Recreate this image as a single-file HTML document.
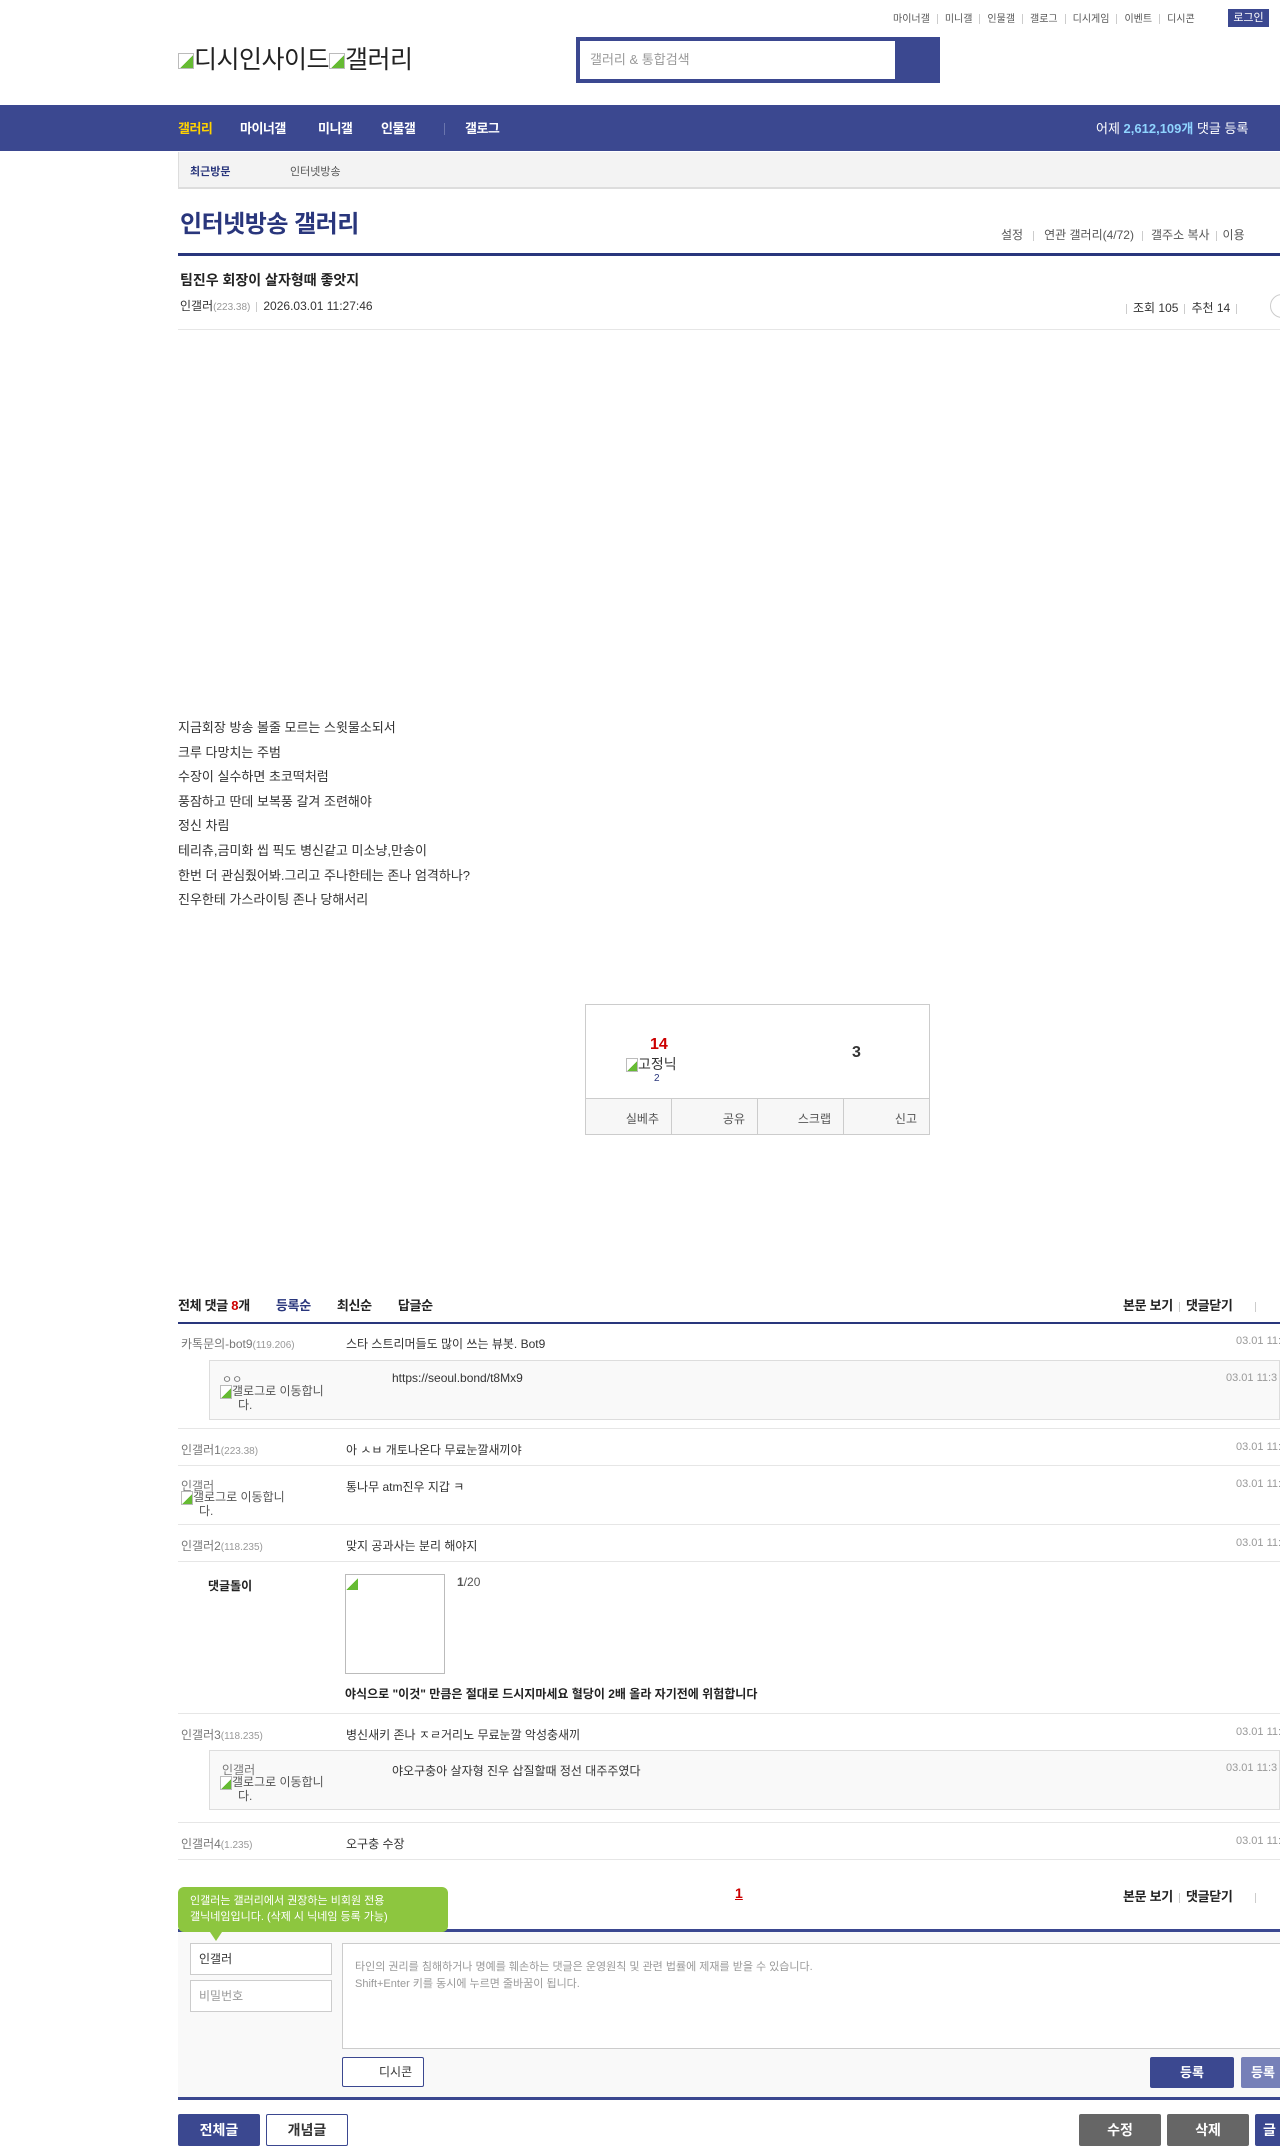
<!DOCTYPE html>
<html><head><meta charset="utf-8"><style>
*{margin:0;padding:0;box-sizing:border-box}
html,body{width:1280px;height:2144px;overflow:hidden;background:#fff;font-family:"Liberation Sans","Noto Sans CJK KR",sans-serif;color:#333;font-size:12px}
.a{position:absolute;white-space:nowrap}
.nv{background:#3b4890}
.g{color:#999}
.sep{display:inline-block;width:1px;height:10px;background:#ccc;margin:0 6px;vertical-align:middle}
.line{position:absolute;left:178px;width:1102px;height:1px;background:#e6e6e6}
.broken{display:inline-block;width:16px;height:16px;border:1px solid #bbb;background:linear-gradient(135deg,#fff 55%,#6b3 55%);vertical-align:middle}
.nvi{position:absolute;top:119px;font-size:13px;font-weight:bold;color:#fff;line-height:20px;letter-spacing:-0.5px}
.ct{font-size:12px}
</style></head><body>
<div class="a" style="top:10px;left:893px;font-size:10px;color:#555">마이너갤<span class="sep" style="margin:0 7px"></span>미니갤<span class="sep" style="margin:0 7px"></span>인물갤<span class="sep" style="margin:0 7px"></span>갤로그<span class="sep" style="margin:0 7px"></span>디시게임<span class="sep" style="margin:0 7px"></span>이벤트<span class="sep" style="margin:0 7px"></span>디시콘</div>
<div class="a nv" style="top:9px;left:1228px;width:41px;height:18px;color:#fff;font-size:11px;line-height:18px;text-align:center">로그인</div>
<div class="a" style="top:40px;left:178px;font-size:25px;color:#222;letter-spacing:-0.5px"><span class="broken"></span>디시인사이드<span class="broken"></span>갤러리</div>
<div class="a nv" style="top:37px;left:576px;width:364px;height:46px"></div>
<div class="a" style="top:41px;left:580px;width:315px;height:38px;background:#fff;font-size:13px;color:#999;line-height:38px;padding-left:10px">갤러리 &amp; 통합검색</div>
<div class="a nv" style="top:105px;left:0;width:1280px;height:46px"></div>
<div class="nvi" style="left:178px;color:#ffd200">갤러리</div>
<div class="nvi" style="left:240px">마이너갤</div>
<div class="nvi" style="left:318px">미니갤</div>
<div class="nvi" style="left:381px">인물갤</div>
<div class="a" style="top:123px;left:444px;width:1px;height:12px;background:#6a75ad"></div>
<div class="nvi" style="left:465px">갤로그</div>
<div class="a" style="top:119px;left:1096px;font-size:13px;color:#fff;line-height:20px">어제 <b style="color:#8fd4ff">2,612,109개</b> 댓글 등록</div>
<div class="a" style="top:152px;left:178px;width:1102px;height:37px;background:#f3f3f3;border-left:1px solid #ddd;border-bottom:2px solid #ddd"></div>
<div class="a" style="top:163px;left:190px;font-size:11px;font-weight:bold;color:#29367c">최근방문</div>
<div class="a" style="top:163px;left:290px;font-size:11px;color:#555">인터넷방송</div>
<div class="a" style="top:204px;left:180px;font-size:24px;font-weight:bold;color:#29367c;letter-spacing:-0.5px">인터넷방송 갤러리</div>
<div class="a" style="top:226px;left:1001px;font-size:12px;color:#555">설정<span class="sep" style="margin:0 10px"></span>연관 갤러리(4/72)<span class="sep" style="margin:0 8px"></span>갤주소 복사<span class="sep"></span>이용</div>
<div class="a" style="top:253px;left:178px;width:1102px;height:3px;background:#29367c"></div>
<div class="a" style="top:270px;left:180px;font-size:14px;font-weight:bold;color:#222">팀진우 회장이 살자형때 좋앗지</div>
<div class="a" style="top:297px;left:180px;font-size:12px;color:#333">인갤러<span style="font-size:10px;color:#999">(223.38)</span><span class="sep"></span>2026.03.01 11:27:46</div>
<div class="a" style="top:299px;left:1120px;font-size:12px;color:#333"><span class="sep"></span>조회 105<span class="sep"></span>추천 14<span class="sep"></span></div>
<div class="a" style="top:294px;left:1270px;width:24px;height:24px;border:1px solid #ccc;border-radius:12px"></div>
<div class="line" style="top:329px"></div>
<div class="a" style="top:716px;left:178px;font-size:13px;line-height:24.6px;color:#333">지금회장 방송 볼줄 모르는 스윗물소되서<br>크루 다망치는 주범<br>수장이 실수하면 초코떡처럼<br>풍잠하고 딴데 보복풍 갈겨 조련해야<br>정신 차림<br>테리츄,금미화 씹 픽도 병신같고 미소냥,만송이<br>한번 더 관심줬어봐.그리고 주나한테는 존나 엄격하나?<br>진우한테 가스라이팅 존나 당해서리</div>
<div class="a" style="top:1004px;left:585px;width:345px;height:131px;border:1px solid #ccc;border-bottom-width:2px"></div>
<div class="a" style="top:1036px;left:650px;font-size:16px;font-weight:bold;color:#c00">14</div>
<div class="a" style="top:1054px;left:626px;font-size:14px;color:#333"><span class="broken" style="width:12px;height:14px"></span>고정닉</div>
<div class="a" style="top:1073px;left:654px;font-size:10px;color:#29367c">2</div>
<div class="a" style="top:1044px;left:852px;font-size:16px;font-weight:bold;color:#333">3</div>
<div class="a" style="top:1098px;left:586px;width:343px;height:36px;background:#f7f7f7;border-top:1px solid #ccc;display:flex;font-size:12px;color:#555">
<div style="flex:1;border-right:1px solid #ccc;text-align:right;padding:11px 12px 0 0">실베추</div>
<div style="flex:1;border-right:1px solid #ccc;text-align:right;padding:11px 12px 0 0">공유</div>
<div style="flex:1;border-right:1px solid #ccc;text-align:right;padding:11px 12px 0 0">스크랩</div>
<div style="flex:1;text-align:right;padding:11px 12px 0 0">신고</div></div>
<div class="a" style="top:1295px;left:178px;font-size:13px;font-weight:bold;color:#222;letter-spacing:-0.3px">전체 댓글 <span style="color:#c00">8</span>개<span style="color:#29367c;margin-left:26px">등록순</span><span style="margin-left:26px">최신순</span><span style="margin-left:26px">답글순</span></div>
<div class="a" style="top:1295px;left:1123px;font-size:13px;font-weight:bold;color:#222;letter-spacing:-0.3px">본문 보기<span class="sep"></span>댓글닫기<span class="sep" style="margin-left:22px"></span></div>
<div class="a" style="top:1322px;left:178px;width:1102px;height:2px;background:#29367c"></div>
<div class="a" style="top:1335px;left:181px;font-size:12px;color:#777">카톡문의-bot9<span style="font-size:10px;color:#999">(119.206)</span></div>
<div class="a ct" style="top:1335px;left:346px">스타 스트리머들도 많이 쓰는 뷰봇. Bot9</div>
<div class="a g" style="top:1335px;left:1236px;font-size:11px">03.01 11:</div>
<div class="a" style="top:1360px;left:209px;width:1071px;height:60px;background:#f9f9f9;border:1px solid #ddd"></div>
<div class="a" style="top:1371px;left:222px;font-size:11px;color:#777">ㅇㅇ</div>
<div class="a" style="top:1385px;left:220px;font-size:12px;color:#555;line-height:12px"><span class="broken" style="width:12px;height:14px"></span>갤로그로 이동합니<br><span style="margin-left:18px">다.</span></div>
<div class="a" style="top:1371px;left:392px;font-size:12px">https://seoul.bond/t8Mx9</div>
<div class="a g" style="top:1372px;left:1226px;font-size:11px">03.01 11:3</div>
<div class="line" style="top:1428px"></div>
<div class="a" style="top:1441px;left:181px;font-size:12px;color:#777">인갤러1<span style="font-size:10px;color:#999">(223.38)</span></div>
<div class="a ct" style="top:1441px;left:346px">아 ㅅㅂ 개토나온다 무료눈깔새끼야</div>
<div class="a g" style="top:1441px;left:1236px;font-size:11px">03.01 11:</div>
<div class="line" style="top:1465px"></div>
<div class="a" style="top:1477px;left:181px;font-size:12px;color:#777">인갤러</div>
<div class="a" style="top:1491px;left:181px;font-size:12px;color:#555;line-height:12px"><span class="broken" style="width:12px;height:14px"></span>갤로그로 이동합니<br><span style="margin-left:18px">다.</span></div>
<div class="a ct" style="top:1478px;left:346px">통나무 atm진우 지갑 ㅋ</div>
<div class="a g" style="top:1478px;left:1236px;font-size:11px">03.01 11:</div>
<div class="line" style="top:1524px"></div>
<div class="a" style="top:1537px;left:181px;font-size:12px;color:#777">인갤러2<span style="font-size:10px;color:#999">(118.235)</span></div>
<div class="a ct" style="top:1537px;left:346px">맞지 공과사는 분리 해야지</div>
<div class="a g" style="top:1537px;left:1236px;font-size:11px">03.01 11:</div>
<div class="line" style="top:1561px"></div>
<div class="a" style="top:1577px;left:208px;font-size:12px;font-weight:bold;color:#222">댓글돌이</div>
<div class="a" style="top:1574px;left:345px;width:100px;height:100px;border:1px solid #bbb"><span class="broken" style="width:12px;height:14px;border:0"></span></div>
<div class="a" style="top:1575px;left:457px;font-size:12px;color:#555"><b>1</b>/20</div>
<div class="a" style="top:1685px;left:345px;font-size:12px;font-weight:bold;color:#222">야식으로 "이것" 만큼은 절대로 드시지마세요 혈당이 2배 올라 자기전에 위험합니다</div>
<div class="line" style="top:1713px"></div>
<div class="a" style="top:1726px;left:181px;font-size:12px;color:#777">인갤러3<span style="font-size:10px;color:#999">(118.235)</span></div>
<div class="a ct" style="top:1726px;left:346px">병신새키 존나 ㅈㄹ거리노 무료눈깔 악성충새끼</div>
<div class="a g" style="top:1726px;left:1236px;font-size:11px">03.01 11:</div>
<div class="a" style="top:1750px;left:209px;width:1071px;height:60px;background:#f9f9f9;border:1px solid #ddd"></div>
<div class="a" style="top:1761px;left:222px;font-size:12px;color:#777">인갤러</div>
<div class="a" style="top:1776px;left:220px;font-size:12px;color:#555;line-height:12px"><span class="broken" style="width:12px;height:14px"></span>갤로그로 이동합니<br><span style="margin-left:18px">다.</span></div>
<div class="a ct" style="top:1762px;left:392px">야오구충아 살자형 진우 삽질할때 정선 대주주였다</div>
<div class="a g" style="top:1762px;left:1226px;font-size:11px">03.01 11:3</div>
<div class="line" style="top:1822px"></div>
<div class="a" style="top:1835px;left:181px;font-size:12px;color:#777">인갤러4<span style="font-size:10px;color:#999">(1.235)</span></div>
<div class="a ct" style="top:1835px;left:346px">오구충 수장</div>
<div class="a g" style="top:1835px;left:1236px;font-size:11px">03.01 11:</div>
<div class="line" style="top:1859px"></div>
<div class="a" style="top:1885px;left:735px;font-size:14px;font-weight:bold;color:#c00;text-decoration:underline">1</div>
<div class="a" style="top:1886px;left:1123px;font-size:13px;font-weight:bold;color:#222;letter-spacing:-0.3px">본문 보기<span class="sep"></span>댓글닫기<span class="sep" style="margin-left:22px"></span></div>
<div class="a" style="top:1929px;left:178px;width:1102px;height:3px;background:#3b4890"></div>
<div class="a" style="top:1932px;left:178px;width:1102px;height:165px;background:#f9f9f9"></div>
<div class="a" style="top:1887px;left:178px;width:270px;height:45px;background:#8dc63f;border-radius:6px;color:#fff;font-size:11px;line-height:16px;padding:6px 12px">인갤러는 갤러리에서 권장하는 비회원 전용<br>갤닉네임입니다. (삭제 시 닉네임 등록 가능)</div>
<div class="a" style="top:1932px;left:210px;width:0;height:0;border-left:6px solid transparent;border-right:6px solid transparent;border-top:9px solid #8dc63f"></div>
<div class="a" style="top:1943px;left:190px;width:142px;height:32px;background:#fff;border:1px solid #ccc;font-size:12px;color:#333;line-height:30px;padding-left:8px">인갤러</div>
<div class="a" style="top:1980px;left:190px;width:142px;height:32px;background:#fff;border:1px solid #ccc;font-size:12px;color:#999;line-height:30px;padding-left:8px">비밀번호</div>
<div class="a" style="top:1943px;left:342px;width:960px;height:106px;background:#fff;border:1px solid #ccc;font-size:11px;color:#999;line-height:17px;padding:15px 12px">타인의 권리를 침해하거나 명예를 훼손하는 댓글은 운영원칙 및 관련 법률에 제재를 받을 수 있습니다.<br>Shift+Enter 키를 동시에 누르면 줄바꿈이 됩니다.</div>
<div class="a" style="top:2057px;left:342px;width:82px;height:30px;background:#fff;border:1px solid #3b4890;border-radius:2px;font-size:12px;color:#333;line-height:28px;padding-left:36px">디시콘</div>
<div class="a nv" style="top:2057px;left:1150px;width:84px;height:31px;border-radius:2px;color:#fff;font-size:13px;font-weight:bold;line-height:31px;text-align:center">등록</div>
<div class="a" style="top:2057px;left:1241px;width:84px;height:31px;border-radius:2px;background:#7680b8;color:#fff;font-size:13px;font-weight:bold;line-height:31px;padding-left:10px">등록</div>
<div class="a" style="top:2097px;left:178px;width:1102px;height:3px;background:#3b4890"></div>
<div class="a nv" style="top:2114px;left:178px;width:82px;height:32px;border-radius:2px;color:#fff;font-size:14px;font-weight:bold;line-height:32px;text-align:center">전체글</div>
<div class="a" style="top:2114px;left:266px;width:82px;height:32px;border:1px solid #3b4890;border-radius:2px;color:#333;font-size:14px;font-weight:bold;line-height:30px;text-align:center">개념글</div>
<div class="a" style="top:2114px;left:1079px;width:82px;height:32px;background:#666;border-radius:2px;color:#fff;font-size:14px;font-weight:bold;line-height:32px;text-align:center">수정</div>
<div class="a" style="top:2114px;left:1167px;width:82px;height:32px;background:#666;border-radius:2px;color:#fff;font-size:14px;font-weight:bold;line-height:32px;text-align:center">삭제</div>
<div class="a nv" style="top:2114px;left:1255px;width:82px;height:32px;border-radius:2px;color:#fff;font-size:14px;font-weight:bold;line-height:32px;padding-left:8px">글</div>
</body></html>
